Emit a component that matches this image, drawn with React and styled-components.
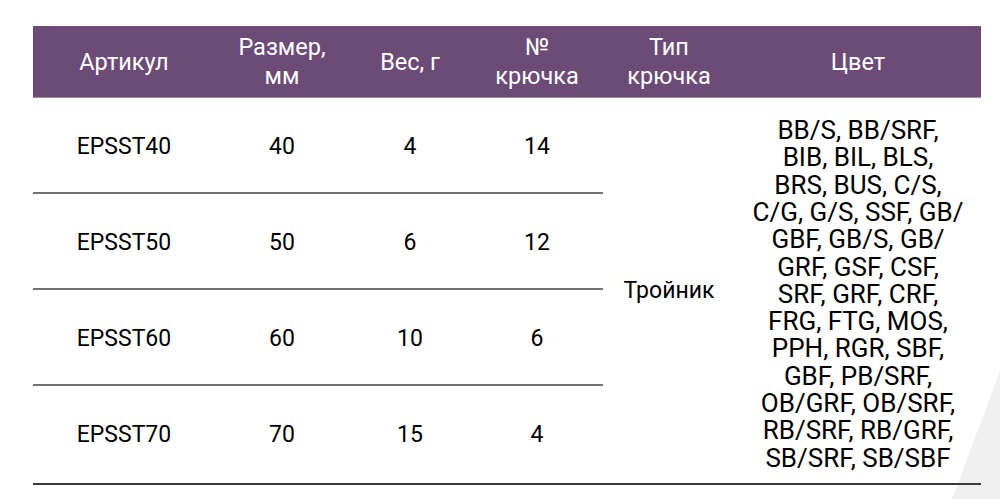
import React from "react";
import styled, { createGlobalStyle } from "styled-components";

const GlobalStyle = createGlobalStyle`
  html, body {
    margin: 0;
    padding: 0;
    background: #ffffff;
  }
  body {
    font-family: Roboto, "Noto Sans", sans-serif;
    color: #111;
  }
`;

const Page = styled.div`
  position: relative;
  width: 1000px;
  height: 499px;
  overflow: hidden;
  padding: 26px 0 0 33px;
  box-sizing: border-box;
`;

const Decor = styled.svg`
  position: absolute;
  right: 0;
  bottom: 0;
  width: 60px;
  height: 140px;
  z-index: 0;
`;

const Table = styled.div`
  position: relative;
  z-index: 1;
  width: 948px;
`;

const cols = "182px 134px 122px 132px 132px 246px";

const HeadRow = styled.div`
  display: grid;
  grid-template-columns: ${cols};
  height: 72px;
  background: #6c4c77;
  border-bottom: 1px solid #9a8aa0;
  box-sizing: border-box;
`;

const HeadCell = styled.div`
  display: flex;
  align-items: center;
  justify-content: center;
  text-align: center;
  color: #ffffff;
  font-size: 23.5px;
  line-height: 29px;
  padding-top: 1px;
`;

const Body = styled.div`
  display: grid;
  grid-template-columns: ${cols};
  grid-template-rows: 96px 96px 96px 97px;
  border-bottom: 2px solid #3a3a3a;
`;

const Cell = styled.div`
  display: flex;
  align-items: center;
  justify-content: center;
  font-size: 23px;
  color: #000;
  border-bottom: ${(p) => (p.$last ? "none" : "2px solid #727272")};
  box-sizing: border-box;
  padding-top: ${(p) => (p.$last ? "0" : "2px")};
`;

const SpanCell = styled.div`
  grid-column: ${(p) => p.$col};
  grid-row: 1 / 5;
  display: flex;
  align-items: center;
  justify-content: center;
  text-align: center;
  color: #000;
  font-size: ${(p) => p.$size || "23px"};
  line-height: ${(p) => p.$lh || "normal"};
`;

const ColorList = styled.div`
  width: 246px;
  padding-top: 8px;
`;

const rows = [
  ["EPSST40", "40", "4", "14"],
  ["EPSST50", "50", "6", "12"],
  ["EPSST60", "60", "10", "6"],
  ["EPSST70", "70", "15", "4"],
];

const colorLines = [
  "BB/S, BB/SRF,",
  "BIB, BIL, BLS,",
  "BRS, BUS, C/S,",
  "C/G, G/S, SSF, GB/",
  "GBF, GB/S, GB/",
  "GRF, GSF, CSF,",
  "SRF, GRF, CRF,",
  "FRG, FTG, MOS,",
  "PPH, RGR, SBF,",
  "GBF, PB/SRF,",
  "OB/GRF, OB/SRF,",
  "RB/SRF, RB/GRF,",
  "SB/SRF, SB/SBF",
];

export default function App() {
  return (
    <>
      <GlobalStyle />
      <Page>
        <Decor viewBox="0 0 60 140" preserveAspectRatio="none">
          <polygon points="12,140 60,12 60,140" fill="#f1f0f1" />
        </Decor>
        <Table>
          <HeadRow>
            <HeadCell>Артикул</HeadCell>
            <HeadCell>
              Размер,
              <br />
              мм
            </HeadCell>
            <HeadCell>Вес, г</HeadCell>
            <HeadCell>
              №
              <br />
              крючка
            </HeadCell>
            <HeadCell>
              Тип
              <br />
              крючка
            </HeadCell>
            <HeadCell>Цвет</HeadCell>
          </HeadRow>
          <Body>
            {rows.map((r, i) =>
              r.map((v, j) => (
                <Cell
                  key={`${i}-${j}`}
                  $last={i === rows.length - 1}
                  style={{ gridColumn: j + 1, gridRow: i + 1 }}
                >
                  {v}
                </Cell>
              ))
            )}
            <SpanCell $col="5">Тройник</SpanCell>
            <SpanCell $col="6" $size="26px" $lh="27.3px">
              <ColorList>
                {colorLines.map((l) => (
                  <div key={l}>{l}</div>
                ))}
              </ColorList>
            </SpanCell>
          </Body>
        </Table>
      </Page>
    </>
  );
}
